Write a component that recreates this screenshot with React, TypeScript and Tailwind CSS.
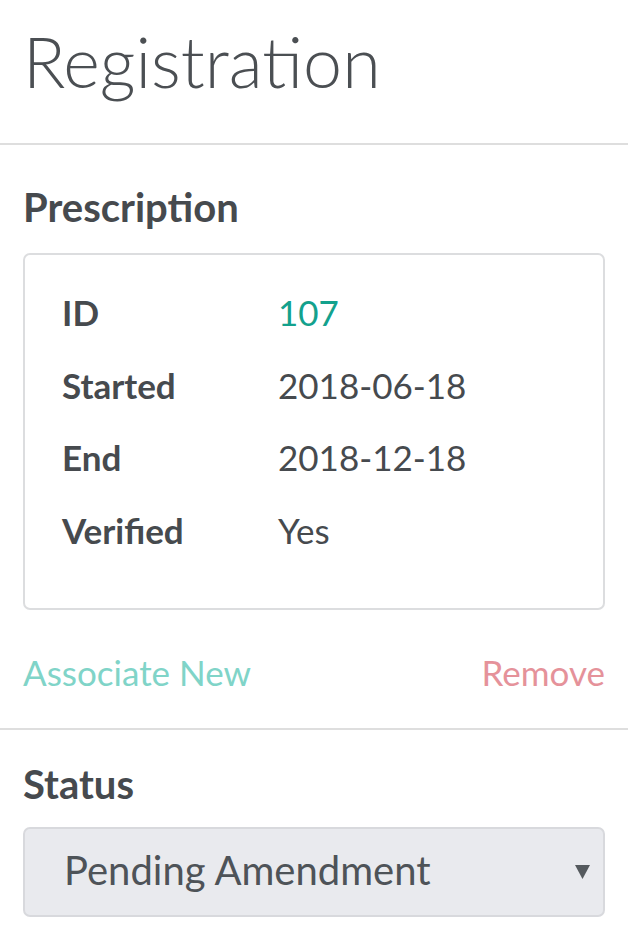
import React from "react";

type Row = { label: string; value: string; accent?: boolean };

const rows: Row[] = [
  { label: "ID", value: "107", accent: true },
  { label: "Started", value: "2018-06-18" },
  { label: "End", value: "2018-12-18" },
  { label: "Verified", value: "Yes" },
];

export default function App() {
  return (
    <div className="min-h-screen w-[628px] bg-white text-[#464a4e] font-['Lato','Liberation_Sans',sans-serif]">
      {/* page title */}
      <div className="px-[23px] pt-[19px] pb-[40px] border-b-2 border-[#dedede]">
        <h1 className="text-[70px] leading-[84px] font-light text-[#4b4f53]">Registration</h1>
      </div>

      {/* prescription section */}
      <div className="px-[23px] pt-[38px] pb-[35px] border-b-2 border-[#dedede]">
        <h2 className="text-[40px] leading-[48px] font-bold">Prescription</h2>
        <div className="mt-[22px] rounded-[7px] border-2 border-[#dcdddf] pl-[37px] pt-[21px] pb-[42px]">
          {rows.map((r) => (
            <div key={r.label} className="grid grid-cols-[216px_1fr] text-[35px] leading-[72.5px]">
              <div className="font-bold">{r.label}</div>
              <div className={r.accent ? "text-[#13a18d]" : ""}>{r.value}</div>
            </div>
          ))}
        </div>
        <div className="mt-[41px] flex items-center justify-between text-[35px] leading-[42px]">
          <button className="text-[#80d4c8]">Associate New</button>
          <button className="text-[#e5929a]">Remove</button>
        </div>
      </div>

      {/* status section */}
      <div className="px-[23px] pt-[30px]">
        <h2 className="text-[40px] leading-[48px] font-bold">Status</h2>
        <div className="mt-[19px] flex items-center justify-between rounded-[7px] border-2 border-[#d8d9dd] bg-[#e9eaee] pl-[39px] pr-[13px] pt-[17px] pb-[21px]">
          <span className="text-[40px] leading-[48px] text-[#4e5358]">Pending Amendment</span>
          <svg width="15" height="14" viewBox="0 0 15 14" className="mt-[4px]">
            <polygon points="0,0 15,0 7.5,14" fill="#555a5e" />
          </svg>
        </div>
      </div>
    </div>
  );
}
